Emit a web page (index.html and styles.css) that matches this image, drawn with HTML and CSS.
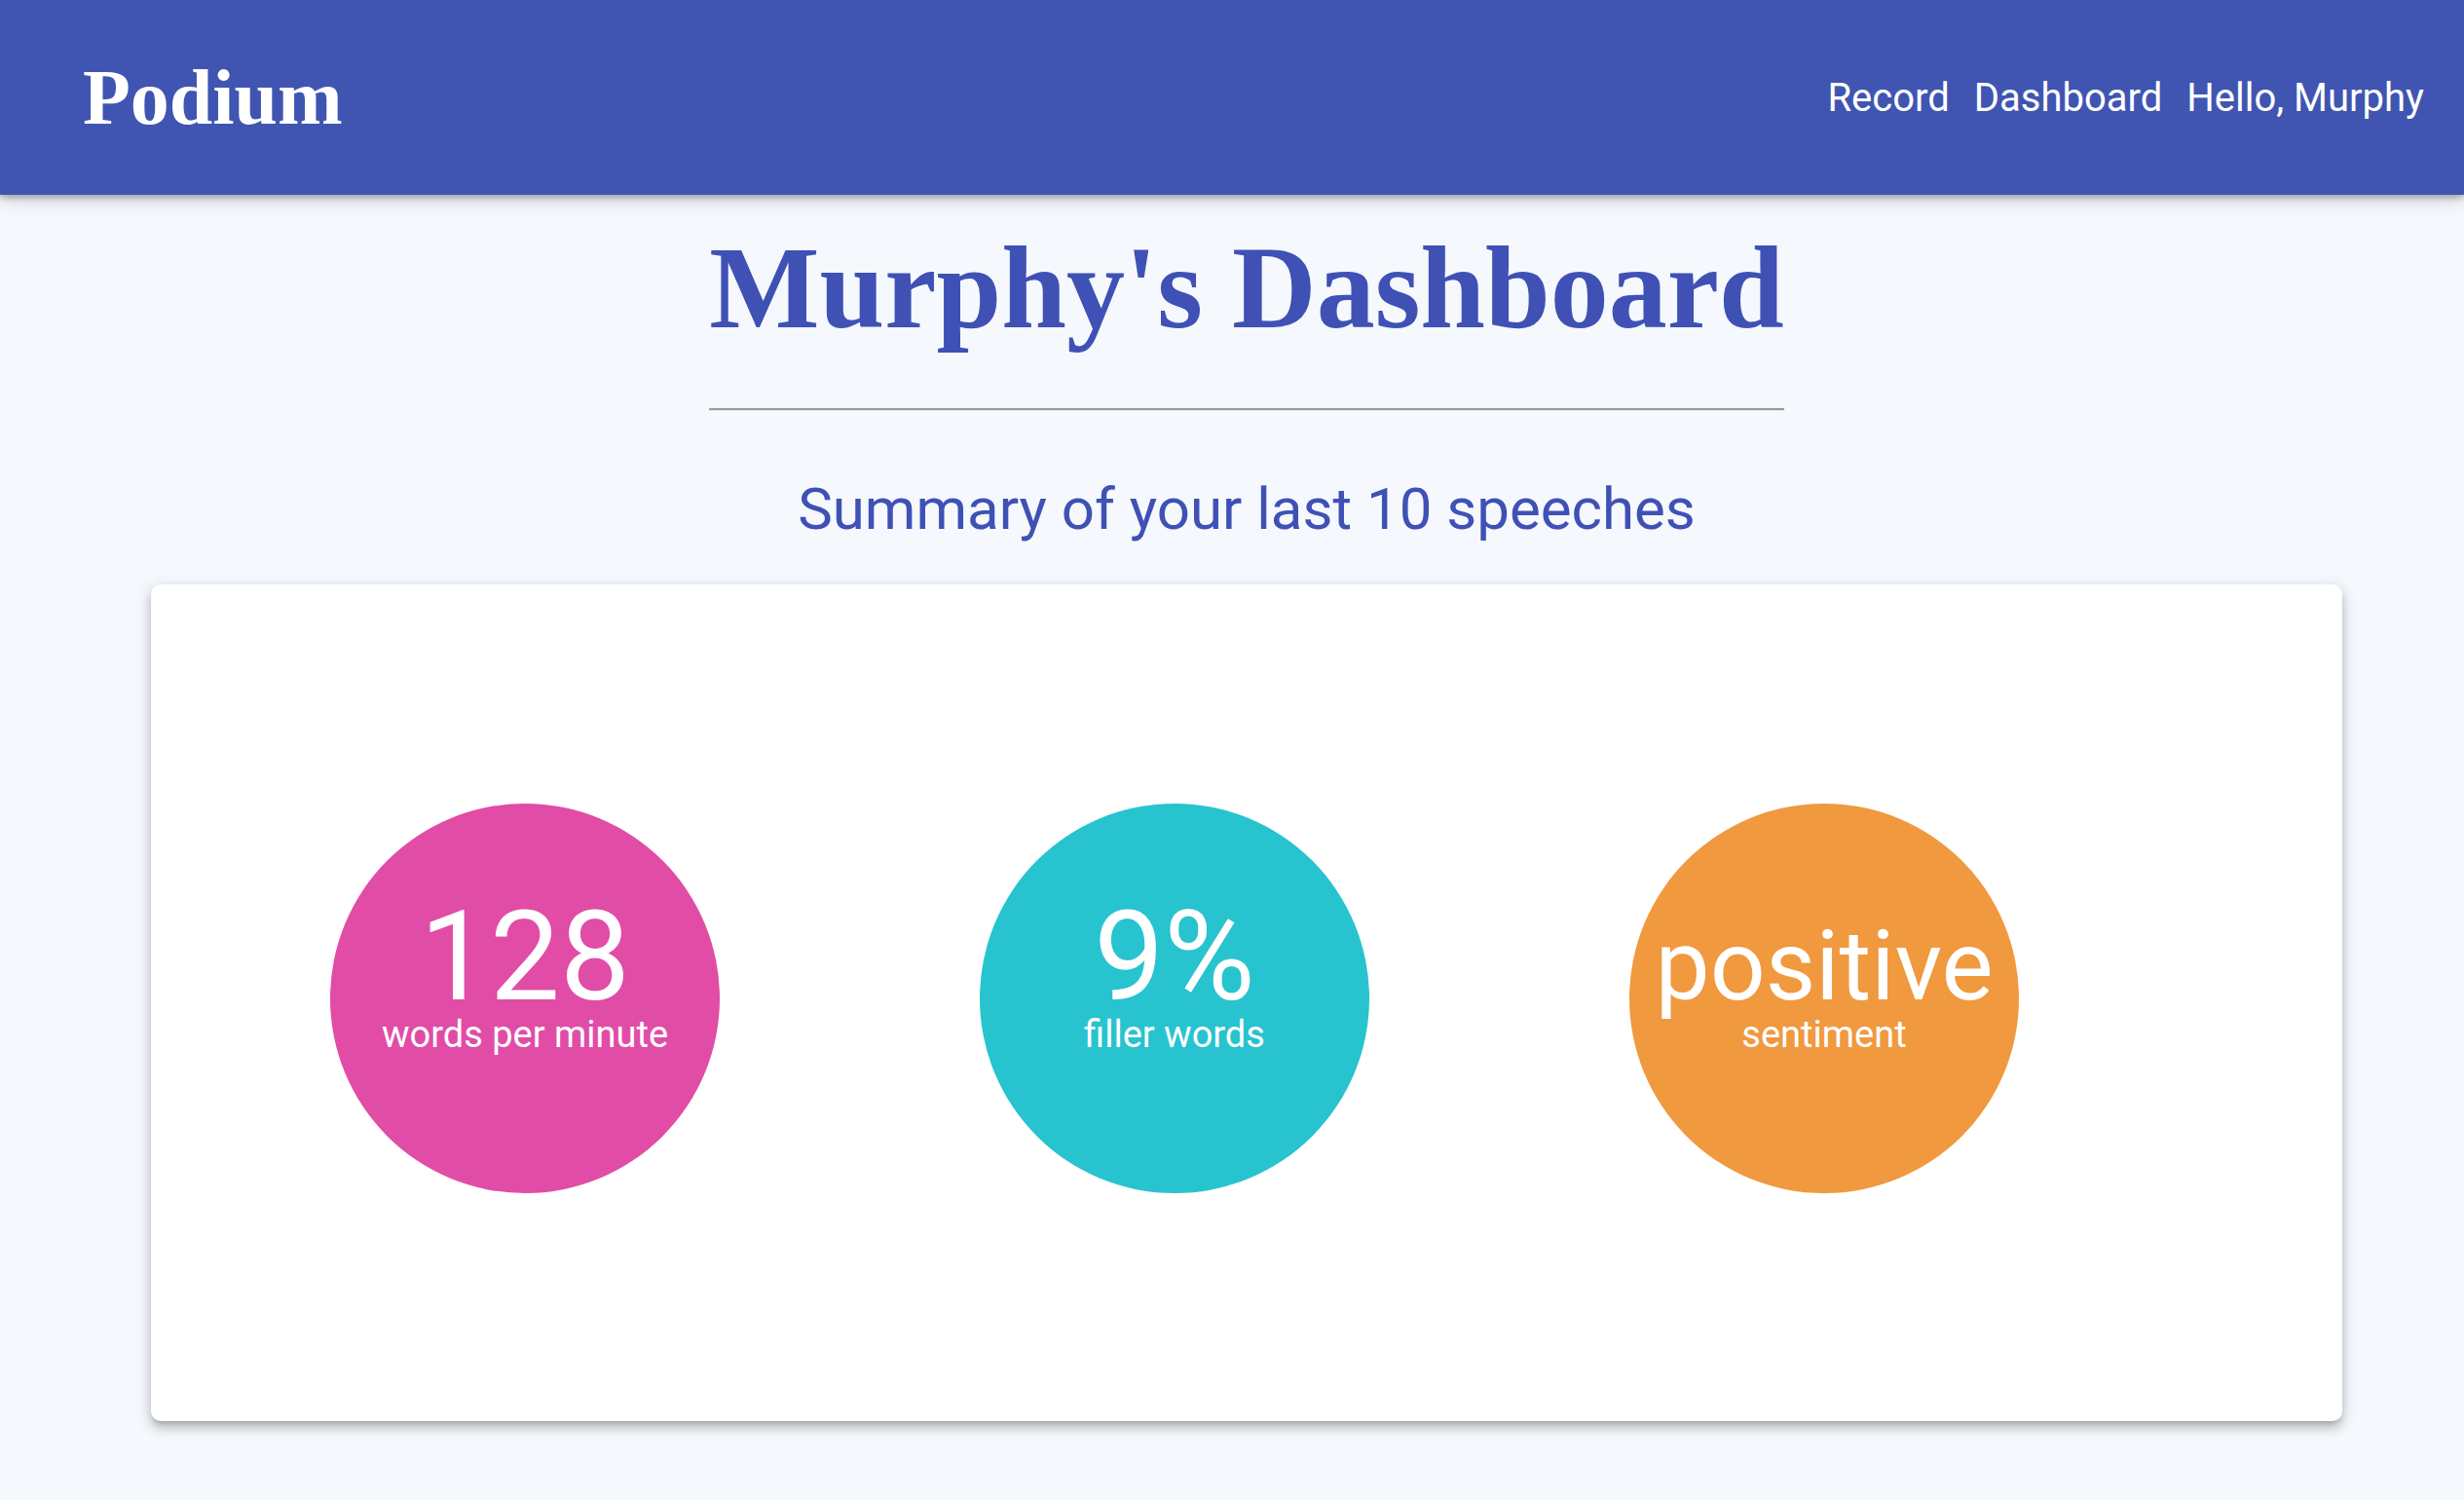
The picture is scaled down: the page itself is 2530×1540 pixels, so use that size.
FILE: index.html
```html
<!DOCTYPE html>
<html lang="en">
<head>
<meta charset="utf-8">
<title>Podium – Dashboard</title>
<link rel="stylesheet" href="styles.css">
</head>
<body>
<header class="topbar">
  <div class="brand">Podium</div>
  <nav class="nav">
    <a class="nav-link" href="#">Record</a>
    <a class="nav-link" href="#">Dashboard</a>
    <span class="nav-link">Hello, Murphy</span>
  </nav>
</header>
<main class="page">
  <div class="title-block">
    <h1 class="page-title">Murphy's Dashboard</h1>
    <hr class="title-rule">
  </div>
  <h2 class="summary">Summary of your last 10 speeches</h2>
  <section class="card">
    <div class="stat stat-pink">
      <div class="stat-value">128</div>
      <div class="stat-label">words per minute</div>
    </div>
    <div class="stat stat-teal">
      <div class="stat-value">9%</div>
      <div class="stat-label">filler words</div>
    </div>
    <div class="stat stat-orange">
      <div class="stat-value stat-value-word">positive</div>
      <div class="stat-label">sentiment</div>
    </div>
  </section>
</main>
</body>
</html>
```
FILE: styles.css
```css
html, body {
  margin: 0;
  padding: 0;
}
body {
  background: #f5f8fc;
  font-family: Roboto, "Liberation Sans", sans-serif;
  min-height: 1540px;
}

.topbar {
  position: relative;
  z-index: 2;
  height: 200px;
  box-sizing: border-box;
  display: flex;
  align-items: center;
  justify-content: space-between;
  padding: 0 41px 0 85px;
  background: #4055b2;
  box-shadow: 0 3px 6px rgba(0,0,0,.28), 0 6px 20px rgba(0,0,0,.14);
}
.brand {
  font-family: "Liberation Serif", "Times New Roman", serif;
  font-weight: 700;
  font-size: 80px;
  color: #fff;
}
.nav {
  display: flex;
  gap: 25px;
}
.nav-link {
  color: #fff;
  text-decoration: none;
  font-size: 40px;
  font-family: Roboto, sans-serif;
}

.page {
  display: flex;
  flex-direction: column;
  align-items: center;
  padding-left: 30px;
}
.title-block {
  width: fit-content;
  margin-top: 27px;
}
.page-title {
  margin: 0;
  font-family: "Liberation Serif", "Times New Roman", serif;
  font-weight: 700;
  font-size: 120px;
  line-height: normal;
  color: #3f51b5;
}
.title-rule {
  margin: 54px 0 0;
  border: 0;
  border-top: 2px solid #9a9a9a;
  border-bottom: 1px solid #e6e8ec;
  height: 0;
}
.summary {
  margin: 65px 0 0;
  font-family: Roboto, sans-serif;
  font-weight: 400;
  font-size: 60px;
  line-height: normal;
  color: #3f51b5;
}

.card {
  margin-top: 42px;
  width: 2250px;
  height: 859px;
  box-sizing: border-box;
  background: #fff;
  border-radius: 10px;
  box-shadow: 0 5px 6px -3px rgba(0,0,0,.22), 0 8px 12px 1px rgba(0,0,0,.12), 0 3px 16px 2px rgba(0,0,0,.1);
  display: flex;
  align-items: flex-start;
  gap: 267px;
  padding: 225px 0 0 184px;
}
.stat {
  width: 400px;
  height: 400px;
  flex: none;
  border-radius: 50%;
  box-sizing: border-box;
  display: flex;
  flex-direction: column;
  align-items: center;
  justify-content: flex-end;
  padding-bottom: 141px;
  color: #fff;
  font-family: Roboto, sans-serif;
}
.stat-pink { background: #e14ca7; }
.stat-teal { background: #27c3cf; }
.stat-orange { background: #f0993f; }
.stat-value {
  font-size: 128px;
  line-height: 0.6836;
  white-space: nowrap;
}
.stat-value-word {
  font-size: 100px;
}
.stat-label {
  margin-top: 14px;
  font-size: 38px;
  line-height: normal;
  white-space: nowrap;
}
```
